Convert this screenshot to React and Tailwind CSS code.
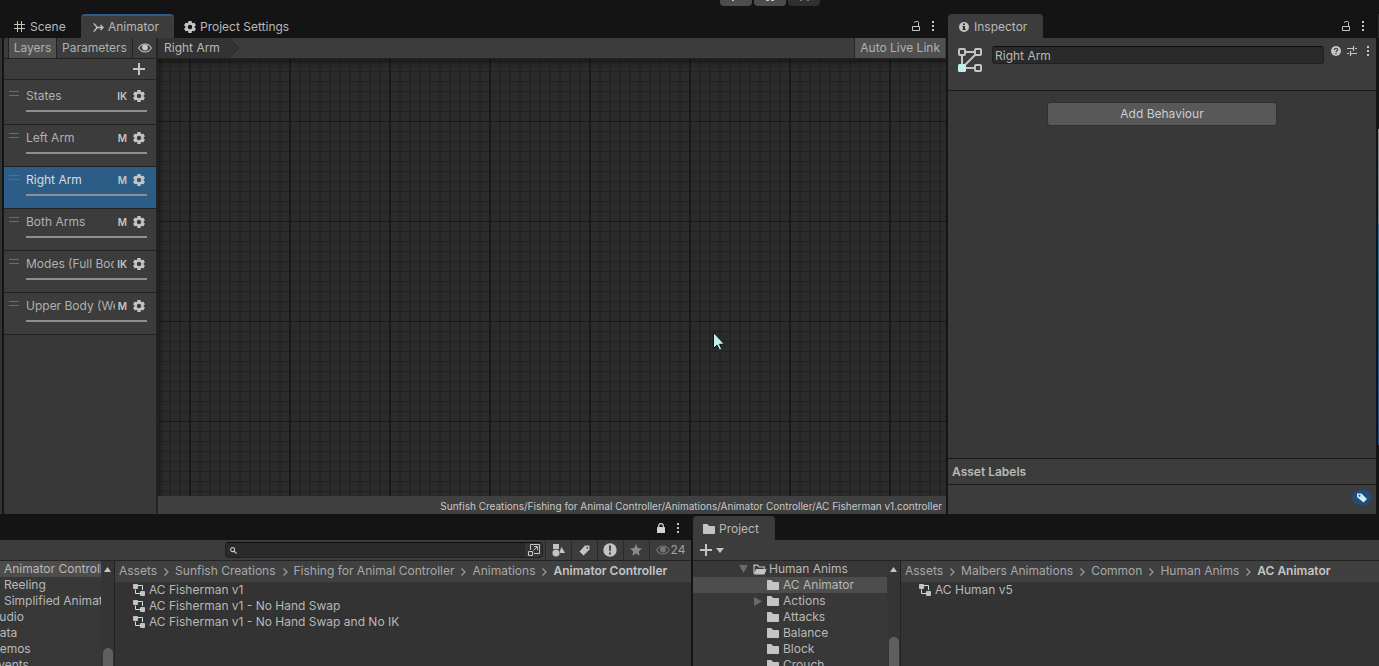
import React, { useState } from 'react';

const layers = [
  { name: 'States', flag: 'IK' },
  { name: 'Left Arm', flag: 'M' },
  { name: 'Right Arm', flag: 'M' },
  { name: 'Both Arms', flag: 'M' },
  { name: 'Modes (Full Bod', flag: 'IK' },
  { name: 'Upper Body (We', flag: 'M' },
];

const leftPath = ['Assets', 'Sunfish Creations', 'Fishing for Animal Controller', 'Animations', 'Animator Controller'];
const rightPath = ['Assets', 'Malbers Animations', 'Common', 'Human Anims', 'AC Animator'];

const leftTree = [
  { name: 'Animator Controll', pad: 'pl-1', selected: true },
  { name: 'Reeling', pad: 'pl-1' },
  { name: 'Simplified Animat', pad: 'pl-1' },
  { name: 'Audio', pad: '-ml-[9px]' },
  { name: 'Data', pad: '-ml-[9px]' },
  { name: 'Demos', pad: '-ml-[9px]' },
  { name: 'Events', pad: '-ml-[9px]' },
];

const rightTree = ['AC Animator', 'Actions', 'Attacks', 'Balance', 'Block', 'Crouch'];

function GearIcon({ hole = '#3c3c3c' }) {
  return (
    <svg width="12" height="12" viewBox="0 0 12 12" className="shrink-0">
      <g fill="#c4c4c4">
        <circle cx="6" cy="6" r="4.7" />
        {[0, 60, 120].map((a) => (
          <rect key={a} x="4.3" y="0" width="3.4" height="12" rx="0.6" transform={`rotate(${a} 6 6)`} />
        ))}
      </g>
      <circle cx="6" cy="6" r="2.2" fill={hole} />
    </svg>
  );
}

function EyeIcon({ color = '#c4c4c4' }) {
  return (
    <svg width="14" height="10" viewBox="0 0 14 10" className="shrink-0">
      <path d="M0.6 5C2.2 2.3 4.4 1 7 1s4.8 1.3 6.4 4C11.8 7.7 9.6 9 7 9S2.2 7.7 0.6 5z" fill="none" stroke={color} strokeWidth="1.1" />
      <circle cx="7" cy="4.5" r="2.9" fill={color} />
    </svg>
  );
}

function LockIcon({ locked }) {
  return locked ? (
    <svg width="8" height="10" viewBox="0 0 8 10">
      <rect x="0" y="4" width="8" height="6" rx="0.5" fill="#d2d2d2" />
      <path d="M1.7 5V3a2.3 2.3 0 0 1 4.6 0v2" fill="none" stroke="#d2d2d2" strokeWidth="1.2" />
    </svg>
  ) : (
    <svg width="8" height="10" viewBox="0 0 8 10">
      <path d="M0.5 5.5h7v4h-7z" fill="none" stroke="#c4c4c4" />
      <path d="M2.5 2V1.5Q2.5 0.5 3.5 0.5H5.5Q6.500 0.5 6.500 1.5V5" fill="none" stroke="#c4c4c4" />
    </svg>
  );
}

function DotsIcon() {
  return (
    <svg width="4" height="12" viewBox="0 0 4 12">
      <path d="M1 1h2v2H1zM1 5h2v2H1zM1 9h2v2H1z" fill="#c4c4c4" />
    </svg>
  );
}

function PlusIcon() {
  return (
    <svg width="12" height="12" viewBox="0 0 12 12">
      <path d="M5 0h2v5h5v2H7v5H5V7H0V5h5z" fill="#c4c4c4" />
    </svg>
  );
}

function FolderIcon() {
  return (
    <svg width="12" height="10" viewBox="0 0 12 10" className="shrink-0">
      <path d="M0 0.7Q0 0 0.7 0H4.5L6 2h5.3q0.7 0 0.7 0.7V9.3q0 0.7-0.7 0.7H0.7Q0 10 0 9.3z" fill="#c4c4c4" />
    </svg>
  );
}

function OpenFolderIcon() {
  return (
    <svg width="14" height="11" viewBox="0 0 14 11" className="shrink-0">
      <path d="M1 9.5V1.2h3.5L6 3h5.3v1.8" fill="none" stroke="#c4c4c4" strokeWidth="1.2" />
      <path d="M3 5h10.5L11.5 10.5H0.8z" fill="#c4c4c4" />
    </svg>
  );
}

function ControllerIcon() {
  return (
    <svg width="12" height="12" viewBox="0 0 12 12" className="shrink-0">
      <path d="M5 1.5h4.500V6M2.500 5.500V9.500H7" fill="none" stroke="#b9ece4" />
      <rect x="0" y="0" width="5" height="5" rx="1" fill="#c4c4c4" />
      <rect x="7" y="7" width="5" height="5" rx="1" fill="#c4c4c4" />
    </svg>
  );
}

function StateIcon() {
  return (
    <svg width="24" height="24" viewBox="0 0 24 24" className="shrink-0">
      <path d="M7 4h10M4 7v10M5.500 18.500L18 6M7 20h10" stroke="#c4c4c4" strokeWidth="2" />
      <g fill="#3c3c3c" stroke="#c4c4c4" strokeWidth="2">
        <rect x="1" y="1" width="6" height="6" rx="1" />
        <rect x="17" y="1" width="6" height="6" rx="1" />
        <rect x="17" y="17" width="6" height="6" rx="1" />
      </g>
      <rect x="0" y="16" width="8" height="8" rx="1.5" fill="#c1f0ea" />
    </svg>
  );
}

function Breadcrumb({ path }) {
  return (
    <nav className="flex h-[21px] items-center gap-[6px] overflow-hidden bg-[#404040] pb-px pl-1 whitespace-nowrap" aria-label="Folder path">
      {path.map((part, i) => (
        <React.Fragment key={part}>
          {i > 0 && (
            <svg width="6" height="8" viewBox="0 0 6 8" className="mt-px shrink-0">
              <path d="M1.500 0.500L5 4L1.500 7.500" fill="none" stroke="#9a9a9a" strokeWidth="1.300" />
            </svg>
          )}
          <a href="#" className={i === path.length - 1 ? 'font-semibold text-[#c4c4c4]' : 'text-[#a8a8a8]'}>{part}</a>
        </React.Fragment>
      ))}
    </nav>
  );
}

function AssetRow({ name }) {
  return (
    <li className="flex h-4 items-center gap-1 pl-[18px] whitespace-nowrap">
      <ControllerIcon />
      {name}
    </li>
  );
}

function Scrollbar({ thumb }) {
  return (
    <div className="flex w-[14px] shrink-0 flex-col items-center overflow-hidden border-r border-[#232323] bg-[#353535]">
      <svg width="7" height="5" viewBox="0 0 7 5" className="mt-[6px] shrink-0">
        <path d="M3.5 0L7 5H0z" fill="#c4c4c4" />
      </svg>
      <div className={`w-[10px] shrink-0 rounded-t-full bg-[#5f5f5f] ${thumb}`} />
    </div>
  );
}

function LayerRow({ layer, selected, onSelect }) {
  return (
    <li className={`flex h-[42px] items-start border-b border-[#232323] pr-[9px] pl-[5px] ${selected ? 'bg-[#2c5d87]' : ''}`}>
      <svg width="10" height="5" viewBox="0 0 10 5" className="mt-2 mr-[7px] shrink-0">
        <path d="M0 0.5h10M0 4.5h10" stroke="#6a6a6a" />
      </svg>
      <div className="flex min-w-0 flex-1 flex-col">
        <div className="mb-[1px] flex h-[26px] items-center">
          <button
            onClick={onSelect}
            className={`min-w-0 flex-1 overflow-hidden text-left whitespace-nowrap ${selected ? 'text-[#dcdcdc]' : 'text-[#b0b0b0]'}`}
          >
            {layer.name}
          </button>
          <span className="ml-[3px] text-[10px] font-semibold text-[#c4c4c4]">{layer.flag}</span>
          <button aria-label={`${layer.name} settings`} className="mr-[2px] ml-[6px]">
            <GearIcon hole={selected ? '#2c5d87' : '#3c3c3c'} />
          </button>
        </div>
        <div className="h-[2px] bg-[#8f8f8f]" />
      </div>
    </li>
  );
}

function AnimatorPanel() {
  const [current, setCurrent] = useState(2);
  return (
    <section className="flex min-w-0 flex-1 flex-col">
      <div className="flex h-6 shrink-0">
        <button className="flex w-[77px] items-center gap-[5px] pt-px pl-[10px]">
          <svg width="11" height="11" viewBox="0 0 11 11">
            <path d="M3.5 0v11M7.5 0v11M0 3.5h11M0 7.5h11" stroke="#c4c4c4" />
          </svg>
          Scene
        </button>
        <button className="flex w-[93px] items-center gap-1 rounded-t-sm border-t-2 border-[#2c5d87] bg-[#3c3c3c] pl-3">
          <svg width="11" height="9" viewBox="0 0 11 9" className="shrink-0">
            <path d="M0.5 0.700C2.500 0.700 2.500 4.500 5 4.500M0.500 8.300C2.500 8.300 2.500 4.500 5 4.500M4 4.500h6M7.500 2L10 4.500L7.500 7" fill="none" stroke="#c4c4c4" strokeWidth="1.300" />
          </svg>
          Animator
        </button>
        <button className="flex items-center gap-1 pt-px pl-[10px]"><GearIcon hole="#141414" />Project Settings</button>
        <div className="ml-auto flex items-center gap-[11px] pr-[11px]">
          <button aria-label="Lock"><LockIcon /></button>
          <button aria-label="More"><DotsIcon /></button>
        </div>
      </div>

      <div className="flex min-h-0 flex-1 bg-[#383838]">
        <div className="flex w-[154px] shrink-0 flex-col border-r-2 border-[#232323]">
          <div className="flex h-[21px] shrink-0 border-b border-[#232323] bg-[#3c3c3c] pl-1 text-[#b0b0b0]">
            <button className="w-[49px] border-x border-[#232323] bg-[#505050]">Layers</button>
            <button className="w-[76px] border-r border-[#232323]">Parameters</button>
            <button aria-label="Toggle visibility" className="flex flex-1 items-center justify-center"><EyeIcon /></button>
          </div>
          <div className="flex h-[21px] shrink-0 items-center justify-end border-b border-[#232323] bg-[#3c3c3c] pr-[11px]">
            <button aria-label="Add layer"><PlusIcon /></button>
          </div>
          <ul className="bg-[#3c3c3c] pt-[3px]">
            {layers.map((layer, i) => (
              <LayerRow key={layer.name} layer={layer} selected={i === current} onSelect={() => setCurrent(i)} />
            ))}
          </ul>
        </div>

        <div className="flex min-w-0 flex-1 flex-col">
          <div className="flex h-[21px] shrink-0 border-b border-[#232323] bg-[#3c3c3c] pr-px">
            <div className="flex items-center bg-[#333333] pl-[6px]">Right Arm</div>
            <svg width="20" height="20" viewBox="0 0 20 20" className="shrink-0">
              <path d="M0 0H9L19 10L9 20H0z" fill="#333333" />
              <path d="M9 0L19 10L9 20" fill="none" stroke="#292929" />
            </svg>
            <button className="ml-auto border-l border-[#232323] bg-[#505050] px-[5px] text-[#b0b0b0]">Auto Live Link</button>
          </div>
          <div className="relative min-h-0 flex-1 bg-[#2b2b2b]">
            <svg width="100%" height="100%" className="block">
              <defs>
                <pattern id="minor" width="10" height="10" x="1" y="2" patternUnits="userSpaceOnUse">
                  <rect width="2" height="10" fill="#252525" />
                  <rect width="10" height="1" fill="#222222" />
                </pattern>
                <pattern id="major" width="100" height="100" x="31" y="62" patternUnits="userSpaceOnUse">
                  <rect width="2" height="100" fill="#1a1a1a" />
                  <rect width="100" height="1" fill="#191919" />
                </pattern>
                <linearGradient id="top" x1="0" y1="0" x2="0" y2="1">
                  <stop offset="0" stopColor="#000" stopOpacity="0.35" />
                  <stop offset="1" stopColor="#000" stopOpacity="0" />
                </linearGradient>
                <linearGradient id="side">
                  <stop offset="0" stopColor="#000" stopOpacity="0.25" />
                  <stop offset="1" stopColor="#000" stopOpacity="0" />
                </linearGradient>
              </defs>
              <rect width="100%" height="100%" fill="url(#minor)" />
              <rect width="100%" height="100%" fill="url(#major)" />
              <rect width="100%" height="9" fill="url(#top)" />
              <rect width="7" height="100%" fill="url(#side)" />
            </svg>
            <svg width="12" height="19" viewBox="0 0 12 19" className="absolute top-[273px] left-[555px]">
              <path d="M0.500 0.500V16.500L4 13L6.500 18.300L8.800 17.300L6.500 12.300H11.500z" fill="#c1f0ea" stroke="#111" />
            </svg>
          </div>
          <div className="flex h-[18px] shrink-0 items-center justify-end bg-[#404040] pt-[2px] pr-1 text-[10px] whitespace-nowrap text-[#c8c8c8]">
            Sunfish Creations/Fishing for Animal Controller/Animations/Animator Controller/AC Fisherman v1.controller
          </div>
        </div>
      </div>
    </section>
  );
}

function InspectorPanel() {
  return (
    <section className="flex w-[428px] shrink-0 flex-col">
      <div className="flex h-6 shrink-0">
        <button className="flex w-[95px] items-center gap-[5px] rounded-t-sm bg-[#3c3c3c] pt-px pl-[11px]">
          <svg width="10" height="10" viewBox="0 0 10 10">
            <circle cx="5" cy="5" r="5" fill="#c4c4c4" />
            <path d="M4 1.500h2v1.500H4zM3.500 4H6V7h0.700v1H3.500V7H4V5H3.500z" fill="#2a2a2a" />
          </svg>
          Inspector
        </button>
        <div className="ml-auto flex items-center gap-[11px] pr-[11px]">
          <button aria-label="Lock"><LockIcon /></button>
          <button aria-label="More"><DotsIcon /></button>
        </div>
      </div>
      <div className="flex min-h-0 flex-1 flex-col bg-[#383838]">
        <div className="flex h-[53px] shrink-0 items-start border-b border-[#1a1a1a] bg-[#3c3c3c] pt-2 pr-[6px] pl-[10px]">
          <div className="pt-[2px]"><StateIcon /></div>
          <input
            aria-label="Layer name"
            defaultValue="Right Arm"
            className="ml-[10px] h-[18px] min-w-0 flex-1 rounded-[3px] border border-[#212121] border-t-[#0d0d0d] bg-[#2a2a2a] px-[2px] text-[#b8b8b8] outline-none"
          />
          <div className="ml-[7px] flex h-[10px] items-center gap-[6px]">
            <button aria-label="Help">
              <svg width="10" height="10" viewBox="0 0 10 10">
                <circle cx="5" cy="5" r="5" fill="#c4c4c4" />
                <path d="M3.4 3.9C3.4 1.7 6.6 1.8 6.6 3.7C6.6 4.900 5 4.900 5 6.100" fill="none" stroke="#3c3c3c" strokeWidth="1.200" />
                <rect x="4.400" y="7" width="1.200" height="1.200" fill="#3c3c3c" />
              </svg>
            </button>
            <button aria-label="Presets">
              <svg width="10" height="10" viewBox="0 0 10 10">
                <path d="M0 2.500h6M8 2.500h2M6.500 0v5M0 7.500h2M4 7.500h6M3.500 5v5" stroke="#c4c4c4" strokeWidth="1.200" />
              </svg>
            </button>
            <button aria-label="More options" className="ml-[3px]"><DotsIcon /></button>
          </div>
        </div>
        <button className="mx-auto mt-[11px] h-6 w-[230px] rounded-[3px] border border-[#303030] bg-[#585858] text-[#cdcdcd]">
          Add Behaviour
        </button>
        <div className="mt-auto flex h-[27px] items-center border-y border-[#1a1a1a] bg-[#3c3c3c] pl-1 font-semibold">Asset Labels</div>
        <div className="flex h-[29px] items-start justify-end bg-[#3c3c3c] pt-[5px] pr-1">
          <button aria-label="Edit labels" className="flex h-[15px] w-5 items-center justify-center rounded-full bg-[#264a78]">
            <svg width="10" height="10" viewBox="0 0 10 10">
              <path d="M0 0.500H4.500L10 6L6.500 9.500L0 4z" fill="#c8f2ec" />
              <circle cx="2.500" cy="2.700" r="1" fill="#264a78" />
            </svg>
          </button>
        </div>
      </div>
    </section>
  );
}

function SearchBar() {
  const cell = 'flex items-center justify-center border-l border-[#292929] w-[26px] pr-px';
  return (
    <div className="flex h-[21px] shrink-0 border-b border-[#232323] bg-[#3c3c3c] pl-[225px]">
      <div className="mt-[2px] flex h-4 min-w-0 flex-1 items-center rounded-[4px] border border-[#212121] border-t-[#0d0d0d] bg-[#2a2a2a] pl-1">
        <svg width="7" height="7" viewBox="0 0 8 8" className="shrink-0">
          <circle cx="3" cy="3" r="2.300" fill="none" stroke="#c4c4c4" strokeWidth="1.200" />
          <path d="M4.700 4.700L7.500 7.500" stroke="#c4c4c4" strokeWidth="1.500" />
        </svg>
        <input aria-label="Search" type="text" className="min-w-0 flex-1 px-1 outline-none" />
        <button aria-label="Open in search" className="flex h-full w-[17px] items-center justify-center rounded-r-[3px] bg-[#353535]">
          <svg width="12" height="12" viewBox="0 0 12 12">
            <path d="M2.500 6V0.500h9v9H6M5.500 6.500L9 3M6 2.500h3.500V6" fill="none" stroke="#c4c4c4" />
            <path d="M0.500 7.500h4v4h-4z" fill="none" stroke="#c4c4c4" />
          </svg>
        </button>
      </div>
      <div className="ml-[2px] flex">
        <button aria-label="Filter by type" className={cell}>
          <svg width="13" height="13" viewBox="0 0 13 13">
            <path d="M1 0h6v5H1zM9.500 3L13 9H7z" fill="#c4c4c4" />
            <circle cx="4" cy="9" r="3.800" fill="#c4c4c4" stroke="#3c3c3c" strokeWidth="0.500" />
          </svg>
        </button>
        <button aria-label="Filter by label" className={cell}>
          <svg width="11" height="11" viewBox="0 0 11 11">
            <path d="M6 0.500L10.500 0.500V4.500L4.500 10.500L0.500 6.500z" fill="#c4c4c4" />
            <circle cx="8.300" cy="2.800" r="0.900" fill="#3c3c3c" />
          </svg>
        </button>
        <button aria-label="Filter by import log" className={cell}>
          <svg width="14" height="14" viewBox="0 0 14 14">
            <circle cx="7" cy="7" r="6.700" fill="#c4c4c4" />
            <path d="M6 2.500h2L7.700 8.300H6.300zM6 9.500h2v2H6z" fill="#3c3c3c" />
          </svg>
        </button>
        <button aria-label="Favourites" className={cell}>
          <svg width="12" height="12" viewBox="0 0 12 12">
            <path d="M6 0L7.700 4.100L12 4.500L8.700 7.400L9.700 11.700L6 9.400L2.300 11.700L3.300 7.400L0 4.500L4.300 4.100z" fill="#8a8a8a" />
          </svg>
        </button>
        <button aria-label="Hidden packages" className="flex w-[42px] items-center justify-center gap-px border-l border-[#292929] text-[#a0a0a0]">
          <EyeIcon color="#757575" />24
        </button>
      </div>
    </div>
  );
}

function BrowserPanel() {
  return (
    <section className="flex w-[691px] shrink-0 flex-col">
      <div className="flex h-6 shrink-0 items-center justify-end gap-[11px] pr-[11px]">
        <button aria-label="Unlock"><LockIcon locked /></button>
        <button aria-label="More"><DotsIcon /></button>
      </div>
      <SearchBar />
      <div className="flex min-h-0 flex-1 bg-[#333333]">
        <ul className="w-[101px] shrink-0 overflow-hidden bg-[#383838]">
          {leftTree.map((f) => (
            <li key={f.name} className={`h-4 leading-4 whitespace-nowrap ${f.pad} ${f.selected ? 'bg-[#4d4d4d]' : ''}`}>{f.name}</li>
          ))}
        </ul>
        <Scrollbar thumb="mt-[76px] h-12" />
        <div className="min-w-0 flex-1">
          <Breadcrumb path={leftPath} />
          <ul>
            <AssetRow name="AC Fisherman v1" />
            <AssetRow name="AC Fisherman v1 - No Hand Swap" />
            <AssetRow name="AC Fisherman v1 - No Hand Swap and No IK" />
          </ul>
        </div>
      </div>
    </section>
  );
}

function ProjectPanel() {
  return (
    <section className="flex min-w-0 flex-1 flex-col">
      <div className="flex h-6 shrink-0">
        <button className="flex w-[82px] items-center gap-1 rounded-t-sm bg-[#3c3c3c] pt-px pl-[10px]"><FolderIcon />Project</button>
      </div>
      <div className="flex h-[21px] shrink-0 items-center border-b border-[#232323] bg-[#3c3c3c] pl-[7px]">
        <button aria-label="Create asset" className="flex items-center gap-1">
          <PlusIcon />
          <svg width="8" height="5" viewBox="0 0 8 5"><path d="M0 0h8L4 5z" fill="#c4c4c4" /></svg>
        </button>
      </div>
      <div className="flex min-h-0 flex-1 bg-[#333333]">
        <ul className="w-[194px] shrink-0 overflow-hidden bg-[#383838]">
          <li className="flex h-4 items-center pl-[46px]">
            <svg width="9" height="8" viewBox="0 0 9 8" className="mr-[5px]"><path d="M0 0h9L4.500 8z" fill="#6a6a6a" /></svg>
            <OpenFolderIcon />
            <span className="ml-[2px]">Human Anims</span>
          </li>
          {rightTree.map((name, i) => (
            <li key={name} className={`flex h-4 items-center pl-[61px] ${i === 0 ? 'bg-[#4d4d4d]' : ''}`}>
              <span className="w-[13px] shrink-0">
                {name === 'Actions' && (
                  <svg width="8" height="9" viewBox="0 0 8 9"><path d="M0 0v9L8 4.500z" fill="#6a6a6a" /></svg>
                )}
              </span>
              <FolderIcon />
              <span className="ml-1">{name}</span>
            </li>
          ))}
        </ul>
        <Scrollbar thumb="mt-[65px] h-12" />
        <div className="min-w-0 flex-1">
          <Breadcrumb path={rightPath} />
          <ul><AssetRow name="AC Human v5" /></ul>
        </div>
      </div>
    </section>
  );
}

export default function App() {
  return (
    <div className="flex h-screen flex-col overflow-hidden bg-[#141414] font-['Inter',sans-serif] text-[12px] leading-4 text-[#b8b8b8]">
      <div className="flex h-[14px] shrink-0 justify-center gap-[2px] pl-[161px]">
        <button aria-label="Play" className="flex h-[6px] w-8 justify-center rounded-b-[4px] bg-[#4d4d4d]">
          <span className="mr-[6px] h-px w-[2px] bg-[#c4c4c4]" />
        </button>
        <button aria-label="Pause" className="flex h-[6px] w-8 justify-center gap-[2px] rounded-b-[4px] bg-[#4d4d4d]">
          <span className="h-px w-[3px] bg-[#c4c4c4]" />
          <span className="h-px w-[3px] bg-[#c4c4c4]" />
        </button>
        <button aria-label="Step" className="flex h-[6px] w-8 justify-center gap-[5px] rounded-b-[4px] bg-[#303030]">
          <span className="h-px w-[2px] bg-[#757575]" />
          <span className="h-px w-[2px] bg-[#757575]" />
        </button>
      </div>
      <div className="flex min-h-0 flex-1">
        <div className="mt-6 mr-[2px] w-[2px] shrink-0 bg-[#333333]" />
        <AnimatorPanel />
        <div className="w-[2px] shrink-0" />
        <InspectorPanel />
        {/* sliver of the docked panel on the far right */}
        <div className="ml-[2px] flex w-px shrink-0 flex-col">
          <div className="h-6 bg-[#2c2c2c]" />
          <div className="mt-[91px] h-[95px] bg-linear-to-b from-[#8a8a8a] to-[#6b7f90]" />
          <div className="h-[221px] bg-linear-to-b from-[#2f78b4] to-[#1d4f8c]" />
        </div>
      </div>
      <div className="mt-[2px] flex h-[150px] shrink-0">
        <BrowserPanel />
        <div className="w-[2px] shrink-0" />
        <ProjectPanel />
      </div>
    </div>
  );
}
